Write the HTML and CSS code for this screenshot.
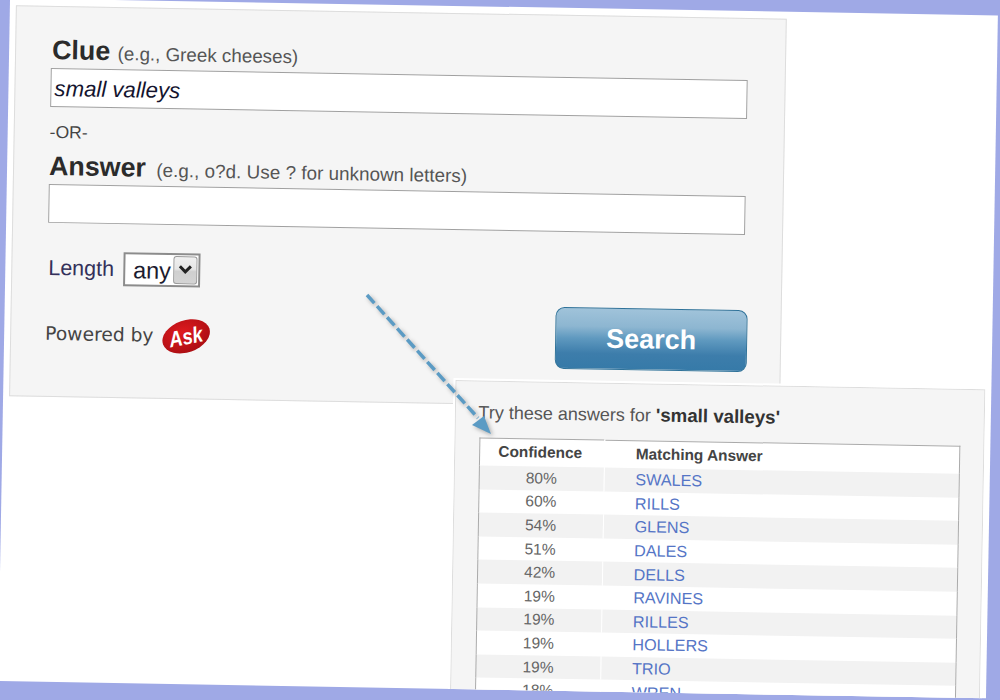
FILE: index.html
```html
<!DOCTYPE html>
<html lang="en">
<head>
<meta charset="utf-8">
<title>Crossword clue search</title>
<link rel="stylesheet" href="styles.css">
</head>
<body>
<main class="sheet">
  <section class="search-panel">
    <div class="field-label"><span class="label-big">Clue</span> <span class="hint">(e.g., Greek cheeses)</span></div>
    <div class="text-box typed">small valleys</div>
    <div class="or">-OR-</div>
    <div class="field-label answer-label"><span class="label-big">Answer</span> <span class="hint">(e.g., o?d. Use ? for unknown letters)</span></div>
    <div class="text-box"></div>
    <div class="length-row">
      <span class="length-label">Length</span>
      <div class="select-box">
        <span class="select-value">any</span>
        <span class="select-btn">
          <svg class="chevron" viewBox="0 0 14 10" width="14" height="10"><path d="M1.5 2 L7 7.5 L12.5 2" fill="none" stroke="#222" stroke-width="3"/></svg>
        </span>
      </div>
    </div>
    <div class="footer-row">
      <div class="powered">
        <span>Powered by</span>
        <svg class="ask-logo" viewBox="0 0 50 38" width="50" height="38">
          <defs>
            <radialGradient id="askRed" cx="45%" cy="35%" r="70%">
              <stop offset="0" stop-color="#e01a1f"/>
              <stop offset="1" stop-color="#a80d12"/>
            </radialGradient>
          </defs>
          <ellipse cx="25" cy="19" rx="24.5" ry="16" transform="rotate(-20 25 19)" fill="url(#askRed)"/>
          <text x="24.5" y="27" text-anchor="middle" textLength="34" lengthAdjust="spacingAndGlyphs" transform="rotate(-12 25 19)" class="ask-text">Ask</text>
        </svg>
      </div>
      <button class="search-btn" type="button">Search</button>
    </div>
  </section>

  <section class="results-panel">
    <p class="results-title">Try these answers for <b>'small valleys'</b></p>
    <table class="results">
      <thead>
        <tr><th class="conf">Confidence</th><th class="ans">Matching Answer</th></tr>
      </thead>
      <tbody>
        <tr><td class="conf">80%</td><td class="ans"><a>SWALES</a></td></tr>
        <tr><td class="conf">60%</td><td class="ans"><a>RILLS</a></td></tr>
        <tr><td class="conf">54%</td><td class="ans"><a>GLENS</a></td></tr>
        <tr><td class="conf">51%</td><td class="ans"><a>DALES</a></td></tr>
        <tr><td class="conf">42%</td><td class="ans"><a>DELLS</a></td></tr>
        <tr><td class="conf">19%</td><td class="ans"><a>RAVINES</a></td></tr>
        <tr><td class="conf">19%</td><td class="ans"><a>RILLES</a></td></tr>
        <tr><td class="conf">19%</td><td class="ans"><a>HOLLERS</a></td></tr>
        <tr><td class="conf">19%</td><td class="ans"><a>TRIO</a></td></tr>
        <tr><td class="conf">18%</td><td class="ans"><a>WREN</a></td></tr>
      </tbody>
    </table>
  </section>
</main>

<svg class="arrow" viewBox="0 0 1000 700" width="1000" height="700">
  <path d="M367 295 L478 418" fill="none" stroke="#5b9bc4" stroke-width="3.5" stroke-dasharray="11 4"/>
  <path d="M472 425 L484 416 L491 434 Z" fill="#5b9bc4"/>
</svg>
</body>
</html>
```
FILE: styles.css
```css
html, body {
  margin: 0;
  padding: 0;
  width: 1000px;
  height: 700px;
  overflow: hidden;
  background: #9fa9e6;
}

body {
  position: relative;
  font-family: "Liberation Sans", Arial, sans-serif;
}

.sheet {
  position: relative;
  box-sizing: border-box;
  width: 988px;
  height: 683px;
  margin: -2px 0 0 10px;
  padding: 7px 0 0 6px;
  overflow: hidden;
  background: #fff;
  transform: rotate(1deg);
  transform-origin: -10px 2px;
}

.search-panel {
  box-sizing: border-box;
  width: 771px;
  height: 391px;
  padding: 28px 33px 0 35px;
  background: #f5f5f5;
  border: 1px solid #ddd;
}

.field-label {
  height: 30px;
  line-height: 30px;
  margin-bottom: 3px;
  white-space: nowrap;
  padding-left: 1px;
}

.answer-label {
  margin-top: 9px;
  margin-bottom: 3px;
  padding-left: 0;
}

.label-big {
  font-size: 26.8px;
  font-weight: bold;
  color: #2b2b2b;
}

.hint {
  font-size: 18.8px;
  color: #555;
  margin-left: 3px;
}

.answer-label .hint {
  margin-left: 6px;
  letter-spacing: 0.05px;
}

.text-box {
  box-sizing: border-box;
  width: 697px;
  height: 39px;
  padding-left: 3px;
  background: #fff;
  border: 1.5px solid #a0a0a0;
  font-size: 22.2px;
  line-height: 40px;
  font-style: italic;
  color: #14142e;
}

.or {
  margin-top: 15px;
  height: 20px;
  line-height: 20px;
  font-size: 17.5px;
  color: #444;
}

.length-row {
  display: flex;
  align-items: center;
  gap: 9px;
  margin-top: 28px;
  padding-left: 1px;
}

.length-label {
  font-size: 21.5px;
  color: #33305a;
}

.select-box {
  box-sizing: border-box;
  display: flex;
  justify-content: space-between;
  width: 77px;
  height: 34px;
  padding: 1px;
  background: #fff;
  border: 2px solid #8c8c8c;
}

.select-value {
  padding-left: 7px;
  font-size: 23.5px;
  line-height: 30px;
  color: #1c1c30;
}

.select-btn {
  box-sizing: border-box;
  display: flex;
  justify-content: center;
  padding-top: 7px;
  width: 24px;
  background: linear-gradient(#f0f0f0, #e6e6e6 45%, #cfcfcf 55%, #d4d4d4);
  border: 1px solid #9a9a9a;
  border-radius: 3px;
}

.footer-row {
  display: flex;
  justify-content: space-between;
  align-items: flex-start;
  margin-top: 13px;
}

.powered {
  display: flex;
  align-items: center;
  gap: 8px;
  margin: 15px 0 0 -1px;
  font-family: "DejaVu Sans", Verdana, sans-serif;
  font-size: 18.7px;
  color: #444;
}

.ask-logo {
  display: block;
  margin-top: 2px;
}

.ask-text {
  font-family: "Liberation Sans", Arial, sans-serif;
  font-size: 22px;
  font-weight: bold;
  font-style: italic;
  fill: #fff;
}

.search-btn {
  box-sizing: border-box;
  width: 192px;
  height: 62px;
  padding: 0;
  font-family: "Liberation Sans", Arial, sans-serif;
  font-size: 27px;
  font-weight: bold;
  color: #fff;
  background: linear-gradient(#a0c3da 0%, #8db6d1 30%, #5f99bf 50%, #3d7dab 75%, #367aa8 100%);
  border: 1.5px solid #2f7299;
  border-radius: 9px;
}

.results-panel {
  position: absolute;
  left: 451.6px;
  top: 374px;
  box-sizing: border-box;
  width: 530px;
  height: 330px;
  padding: 0 0 0 24px;
  background: #f5f5f5;
  border: 1px solid #ddd;
  outline: 2px solid #fff;
}

.results-title {
  margin: 0 0 0 -1px;
  height: 56px;
  padding-top: 19px;
  box-sizing: border-box;
  font-size: 18px;
  line-height: 24px;
  color: #555;
  white-space: nowrap;
}

.results-title b {
  font-size: 18.7px;
  color: #333;
}

.results {
  width: 481px;
  border-collapse: collapse;
  table-layout: fixed;
  background: #fff;
  border: 1.5px solid #aaa;
}

.results th {
  height: 25px;
  padding: 0 0 2px;
  font-size: 15.4px;
  color: #444;
}

.results td {
  height: 23.6px;
  padding: 0;
  line-height: 18px;
}

.results tbody tr:nth-child(odd) td {
  background: #f2f2f2;
}

.results .conf {
  text-align: center;
  border-right: 1px solid #fff;
}

.results th.conf {
  width: 121px;
  padding-right: 3px;
}

.results td.conf {
  font-size: 15.5px;
  color: #666;
}

.results .ans {
  text-align: left;
  padding-left: 31px;
}

.results a {
  font-size: 16.2px;
  color: #5575c6;
}

.arrow {
  position: absolute;
  left: 0;
  top: 0;
  pointer-events: none;
  filter: drop-shadow(2px 2px 2px rgba(0, 0, 0, 0.3));
}
```
